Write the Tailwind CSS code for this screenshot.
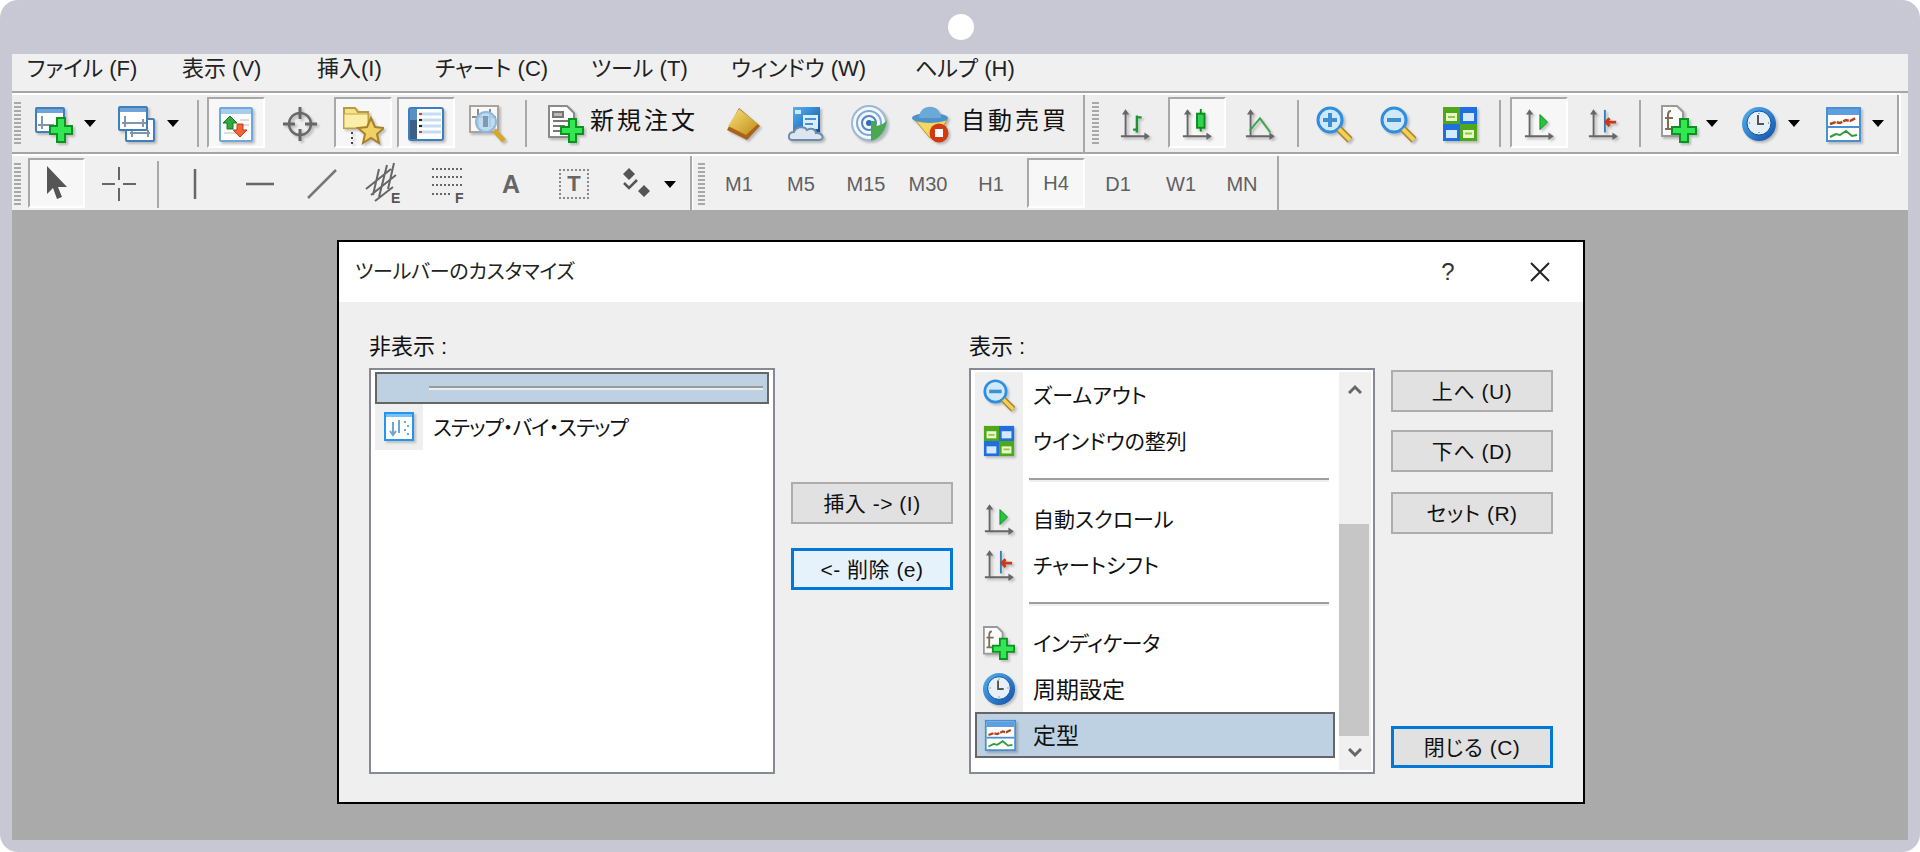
<!DOCTYPE html>
<html lang="ja">
<head>
    <title>ツールバーのカスタマイズ</title>
    <meta charset="utf-8">
    <meta name="viewport" content="width=device-width, initial-scale=1">
    <script src="https://cdn.jsdelivr.net/npm/@tailwindcss/browser@4"></script>
</head>
<body class="bg-white font-['Liberation_Sans','Noto_Sans_CJK_JP',sans-serif] [font-feature-settings:'palt'] text-[#111]">

    <!-- Shared icons -->
    <svg class="absolute w-0 h-0">
        <defs>
            <linearGradient id="gold" x1="0" y1="0" x2="1" y2="1"><stop offset="0" stop-color="#f8e27a"/><stop offset="1" stop-color="#c08a18"/></linearGradient>
            <linearGradient id="blue" x1="0" y1="0" x2="1" y2="1"><stop offset="0" stop-color="#54b4f2"/><stop offset="1" stop-color="#0f4fa8"/></linearGradient>
        </defs>
        <symbol id="i-newchart" viewBox="0 0 38 38">
            <rect x="1" y="3" width="28" height="24" rx="1" fill="#fff" stroke="#3f7fbd" stroke-width="2"/>
            <rect x="2" y="4" width="26" height="4" fill="#6fa5d6"/>
            <path d="M7 11v13M3 20h16" stroke="#7f96ad" stroke-width="2" fill="none"/>
            <polygon points="22,13 30,13 30,21 37,21 37,29 30,29 30,37 22,37 22,29 15,29 15,21 22,21" fill="#33e653" stroke="#0a941f" stroke-width="2"/>
        </symbol>
        <symbol id="i-profiles" viewBox="0 0 38 38">
            <rect x="8" y="14" width="28" height="22" rx="1" fill="#fff" stroke="#3f7fbd" stroke-width="2"/>
            <path d="M12 28h20M14 25v7M30 25v7" stroke="#7f96ad" stroke-width="2"/>
            <rect x="1" y="2" width="28" height="23" rx="1" fill="#fff" stroke="#3f7fbd" stroke-width="2"/>
            <rect x="2" y="3" width="26" height="4" fill="#6fa5d6"/>
            <path d="M4 18h24M7 11v11M25 14v8" stroke="#7f96ad" stroke-width="2"/>
        </symbol>
        <symbol id="i-market" viewBox="0 0 36 36">
            <rect x="2" y="2" width="32" height="33" rx="1" fill="#fdfdfd" stroke="#6fa8dc" stroke-width="2"/>
            <rect x="3" y="3" width="30" height="5" fill="#a8cdec"/>
            <path d="M22 14h9M22 19h9M6 27h12" stroke="#ddd" stroke-width="2"/>
            <polygon points="12,10 19,17 15,17 15,23 9,23 9,17 5,17" fill="#33a83c" stroke="#147a22"/>
            <polygon points="22,31 29,24 25,24 25,18 19,18 19,24 15,24" fill="#f0653a" stroke="#c83a18"/>
        </symbol>
        <symbol id="i-crosshair" viewBox="0 0 36 36">
            <circle cx="18" cy="18" r="11" fill="none" stroke="#6a6a6a" stroke-width="2.5"/>
            <path d="M18 1v12M18 23v12M1 18h12M23 18h12" stroke="#666" stroke-width="3"/>
        </symbol>
        <symbol id="i-favorites" viewBox="0 0 42 42">
            <path d="M2 7V5h11l3 4h10v16H2z" fill="#f5e38a" stroke="#b89b3a" stroke-width="2"/>
            <rect x="2" y="11" width="24" height="14" fill="#fbeea8" stroke="#c2a548"/>
            <polygon points="29,15 33,24 42,25 35,31 37,40 29,35 21,40 23,31 16,25 25,24" fill="#eed264" stroke="#a8802a" stroke-width="2"/>
            <path d="M10 29v2M10 34v2M10 39v2" stroke="#444" stroke-width="2"/>
        </symbol>
        <symbol id="i-navigator" viewBox="0 0 36 36">
            <rect x="1" y="2" width="34" height="32" rx="2" fill="#fff" stroke="#3a7fc0" stroke-width="2"/>
            <rect x="2" y="3" width="7" height="30" fill="#5c90c4"/>
            <rect x="2" y="14" width="7" height="19" fill="#3d5f86"/>
            <path d="M11 8h22M11 14h22M11 20h22M11 26h22" stroke="#c6dcf2" stroke-width="3"/>
            <path d="M11 8h3M11 26h3" stroke="#d8452a" stroke-width="2"/>
            <path d="M11 14h3M11 20h3" stroke="#222" stroke-width="2"/>
        </symbol>
        <symbol id="i-tester" viewBox="0 0 38 38">
            <rect x="1" y="1" width="28" height="26" fill="#f8f8f8" stroke="#aaa39c" stroke-width="2"/>
            <path d="M9 4v18M21 4v18M3 12h24" stroke="#8a8a8a" stroke-width="2"/>
            <circle cx="17" cy="17" r="10" fill="#b4d6f0" fill-opacity=".85" stroke="#8fb8da" stroke-width="2"/>
            <rect x="14" y="11" width="5" height="11" fill="#7d9ab5"/>
            <path d="M25 25l10 11" stroke="#d4a82f" stroke-width="5"/>
        </symbol>
        <symbol id="i-neworder" viewBox="0 0 36 38">
            <path d="M1 1h18l7 7v24H1z" fill="#fff" stroke="#8a8a8a" stroke-width="2"/>
            <path d="M5 7h10v5H5zM5 16h16M5 21h12M5 26h10" stroke="#777" stroke-width="2" fill="#bbb"/>
            <polygon points="21,14 28,14 28,22 35,22 35,29 28,29 28,37 21,37 21,29 13,29 13,22 21,22" fill="#33e653" stroke="#0a941f" stroke-width="2"/>
        </symbol>
        <symbol id="i-book" viewBox="0 0 36 36">
            <polygon points="14,2 35,20 22,34 2,24" fill="#a8621a"/>
            <polygon points="14,3 33,18 21,29 3,20" fill="url(#gold)"/>
        </symbol>
        <symbol id="i-server" viewBox="0 0 36 36">
            <rect x="5" y="1" width="27" height="25" fill="url(#blue)"/>
            <rect x="15" y="9" width="15" height="14" fill="#d9eefc"/>
            <path d="M17 13h11M17 18h8" stroke="#4a90d0" stroke-width="2"/>
            <rect x="7" y="4" width="6" height="4" fill="#cfeaff"/>
            <path d="M4 34c-5 0-4-8 2-8 2-6 11-6 13-2 5-3 9 0 9 3 7-1 9 7 3 7z" fill="#dde6ee" stroke="#6c8cab" stroke-width="2"/>
        </symbol>
        <symbol id="i-signal" viewBox="0 0 38 38">
            <circle cx="19" cy="18" r="17" fill="#f5f8fa" stroke="#9ab9d8" stroke-width="2"/>
            <circle cx="19" cy="18" r="12" fill="none" stroke="#7fa8d6" stroke-width="2"/>
            <circle cx="19" cy="18" r="7" fill="none" stroke="#4f86c6" stroke-width="2"/>
            <circle cx="19" cy="18" r="3" fill="#2c6fb4"/>
            <path d="M21 16h4v5c6 0 11-4 12-6-1 10-7 19-16 21z" fill="#49a94e"/>
        </symbol>
        <symbol id="i-auto" viewBox="0 0 38 38">
            <path d="M4 15l15 18 8-3 9-15z" fill="#f3d75e" stroke="#b8962c"/>
            <ellipse cx="19" cy="13" rx="18" ry="5" fill="#4b93c8"/>
            <path d="M8 13c0-15 22-15 22 0z" fill="#6baad6"/>
            <circle cx="28" cy="28" r="9.5" fill="#d23a14"/>
            <rect x="24" y="24" width="8" height="8" fill="#fff"/>
        </symbol>
        <g id="axis">
            <path d="M7 3v27M2 30h29M7 3l-2 3h4zM31 30l-3-2v4z" stroke="#666" stroke-width="2" fill="#666"/>
        </g>
        <symbol id="i-bar" viewBox="0 0 34 34">
            <use href="#axis"/>
            <path d="M19 8v18M19 10h5M15 23h4" stroke="#139a2a" stroke-width="2.5" fill="none"/>
        </symbol>
        <symbol id="i-candle" viewBox="0 0 34 34">
            <use href="#axis"/>
            <path d="M21 1v24" stroke="#0c8a1e" stroke-width="2"/>
            <rect x="17" y="6" width="8" height="15" fill="#30d34f" stroke="#0c8a1e" stroke-width="2"/>
        </symbol>
        <symbol id="i-line" viewBox="0 0 34 34">
            <use href="#axis"/>
            <path d="M6 24l11-13 11 15" stroke="#3aa64a" stroke-width="2" fill="none"/>
        </symbol>
        <symbol id="i-zoomin" viewBox="0 0 36 36">
            <circle cx="14" cy="14" r="12" fill="#cfe9fb" stroke="#2f8ee0" stroke-width="3"/>
            <path d="M14 7v14M7 14h14" stroke="#3d8fd0" stroke-width="4"/>
            <path d="M23 23l11 11" stroke="#a8841f" stroke-width="7"/>
            <path d="M23 23l11 11" stroke="#f0cf5c" stroke-width="4"/>
        </symbol>
        <symbol id="i-zoomout" viewBox="0 0 36 36">
            <circle cx="14" cy="14" r="12" fill="#cfe9fb" stroke="#2f8ee0" stroke-width="3"/>
            <path d="M7 14h14" stroke="#3d8fd0" stroke-width="4"/>
            <path d="M23 23l11 11" stroke="#a8841f" stroke-width="7"/>
            <path d="M23 23l11 11" stroke="#f0cf5c" stroke-width="4"/>
        </symbol>
        <symbol id="i-tile" viewBox="0 0 36 36">
            <rect x="1" y="1" width="17" height="17" fill="#4fa81a"/><rect x="18" y="1" width="17" height="17" fill="#1f6fe0"/>
            <rect x="1" y="18" width="17" height="17" fill="#1f6fe0"/><rect x="18" y="18" width="17" height="17" fill="#4fa81a"/>
            <rect x="4" y="7" width="11" height="8" fill="#e8f8c8"/><rect x="21" y="7" width="11" height="8" fill="#d4e9fb"/>
            <rect x="4" y="24" width="11" height="8" fill="#d4e9fb"/><rect x="21" y="24" width="11" height="8" fill="#e8f8c8"/>
            <path d="M6 11h7M23 27.500h7" stroke="#8fc84a" stroke-width="2"/>
        </symbol>
        <symbol id="i-scroll" viewBox="0 0 34 34">
            <use href="#axis"/>
            <polygon points="18,7 26,15 18,23" fill="#22c83a" stroke="#0f8a20"/>
        </symbol>
        <symbol id="i-shift" viewBox="0 0 34 34">
            <use href="#axis"/>
            <path d="M19 2v24" stroke="#2f7fb8" stroke-width="2"/>
            <path d="M21 15h10M24 11l-4 4 4 4" stroke="#c8381a" stroke-width="3" fill="none"/>
        </symbol>
        <symbol id="i-indicator" viewBox="0 0 36 38">
            <path d="M1 1h15l6 6v24H1z" fill="#fbfbfb" stroke="#9a9a9a" stroke-width="2"/>
            <path d="M10 6c-3 0-3 2-3 4v14M4 13h8M4 24h7" stroke="#7d6f52" stroke-width="2" fill="none"/>
            <polygon points="19,14 27,14 27,22 35,22 35,29 27,29 27,37 19,37 19,29 11,29 11,22 19,22" fill="#33e653" stroke="#0a941f" stroke-width="2"/>
        </symbol>
        <symbol id="i-clock" viewBox="0 0 36 36">
            <circle cx="18" cy="18" r="17" fill="url(#blue)"/>
            <circle cx="18" cy="17" r="12" fill="#e8f0f7" stroke="#0f4fa8"/>
            <path d="M17 9v9h6" stroke="#555" stroke-width="2" fill="none"/>
            <path d="M18 7v1M18 26v1M8 17h1M27 17h1" stroke="#8aa" stroke-width="2"/>
        </symbol>
        <symbol id="i-template" viewBox="0 0 36 36">
            <rect x="2" y="2" width="33" height="33" fill="#fff" stroke="#4a90d0" stroke-width="2"/>
            <rect x="3" y="3" width="31" height="6" fill="#5d9fe0"/>
            <path d="M3 21h31" stroke="#4a90d0" stroke-width="2"/>
            <path d="M5 18l6-2 4 1 6-3 4 1 6-3" stroke="#b0421c" stroke-width="2.500" fill="none" stroke-dasharray="6 1"/>
            <path d="M5 31l6-3 4 1 6-4 6 5 5-1" stroke="#2f9a3a" stroke-width="2" fill="none"/>
        </symbol>
        <symbol id="i-step" viewBox="0 0 30 30">
            <rect x="1" y="1" width="28" height="27" fill="#fff" stroke="#2196f3" stroke-width="2"/>
            <rect x="2" y="2" width="26" height="3" fill="#7cc0f8"/>
            <path d="M9 10v13M15 8v13M6 19l3 4 3-4" stroke="#6aa6d8" stroke-width="2" fill="none"/>
            <path d="M21 9v2M24 13v2M21 17v2M24 21v2" stroke="#6aa6d8" stroke-width="2"/>
        </symbol>
    </svg>

    <div class="relative w-[1920px] h-[852px] rounded-[18px] bg-[#c8c8d4] pt-[54px] px-[12px] pb-[12px] flex flex-col overflow-hidden">
        <div class="absolute left-[948px] top-[14px] w-[26px] h-[26px] rounded-full bg-white"></div>

        <!-- Menu bar -->
        <div class="h-[37px] bg-[#f0f0f0] flex items-center pl-[15px] pb-[8px] text-[22px] leading-[28px] text-[#222] whitespace-nowrap">
            <div class="w-[155px]">ファイル (F)</div>
            <div class="w-[135px]">表示 (V)</div>
            <div class="w-[118px]">挿入(I)</div>
            <div class="w-[156px]">チャート (C)</div>
            <div class="w-[140px]">ツール (T)</div>
            <div class="w-[184px]">ウィンドウ (W)</div>
            <div>ヘルプ (H)</div>
        </div>
        <div class="h-[2px] bg-[#a5a5a5]"></div>

        <!-- Main toolbar -->
        <div class="bg-[#f0f0f0]">
            <div class="w-[1889px] h-[63px] border-y-2 border-r-2 border-white">
                <div class="h-full border-b-2 border-r-2 border-[#a5a5a5] bg-[#eeeeee] flex items-center [&_svg]:drop-shadow-[2px_2px_1px_rgba(0,0,0,0.22)]">
                    <div class="ml-[2px] w-[7px] h-[43px] bg-[repeating-linear-gradient(to_bottom,#a8a8a8_0,#a8a8a8_2px,transparent_2px,transparent_4px)]"></div>
                    <svg class="ml-[14px] w-[38px] h-[38px] shrink-0"><use href="#i-newchart"/></svg>
                    <div class="ml-[11px] w-[12px] flex justify-center"><div class="border-x-[6px] border-t-[7px] border-x-transparent border-t-black"></div></div>
                    <svg class="ml-[22px] w-[38px] h-[38px] shrink-0"><use href="#i-profiles"/></svg>
                    <div class="ml-[11px] w-[12px] flex justify-center"><div class="border-x-[6px] border-t-[7px] border-x-transparent border-t-black"></div></div>
                    <div class="ml-[18px] w-[2px] h-[47px] bg-[#a8a8a8]"></div>
                    <div class="ml-[8px] w-[58px] h-[51px] -mt-[2px] pt-[3px] flex items-center justify-center border-2 border-t-[#a8a8a8] border-l-[#a8a8a8] border-r-white border-b-white bg-[#f7f7f7]"><svg class="w-[36px] h-[36px]"><use href="#i-market"/></svg></div>
                    <svg class="ml-[17px] w-[36px] h-[36px] shrink-0"><use href="#i-crosshair"/></svg>
                    <div class="ml-[16px] w-[58px] h-[51px] -mt-[2px] pt-[3px] flex items-center justify-center border-2 border-t-[#a8a8a8] border-l-[#a8a8a8] border-r-white border-b-white bg-[#f7f7f7]"><svg class="w-[42px] h-[42px]"><use href="#i-favorites"/></svg></div>
                    <div class="ml-[5px] w-[58px] h-[51px] -mt-[2px] pt-[3px] flex items-center justify-center border-2 border-t-[#a8a8a8] border-l-[#a8a8a8] border-r-white border-b-white bg-[#f7f7f7]"><svg class="w-[36px] h-[36px]"><use href="#i-navigator"/></svg></div>
                    <svg class="ml-[14px] w-[38px] h-[38px] shrink-0"><use href="#i-tester"/></svg>
                    <div class="ml-[18px] w-[2px] h-[47px] bg-[#a8a8a8]"></div>
                    <svg class="ml-[21px] w-[36px] h-[38px] shrink-0"><use href="#i-neworder"/></svg>
                    <div class="ml-[6px] w-[107px] -mt-[5px] text-[24px] tracking-[3px] leading-[30px] whitespace-nowrap">新規注文</div>
                    <svg class="ml-[28px] w-[36px] h-[36px] shrink-0"><use href="#i-book"/></svg>
                    <svg class="ml-[27px] w-[36px] h-[36px] shrink-0"><use href="#i-server"/></svg>
                    <svg class="ml-[26px] w-[38px] h-[38px] shrink-0"><use href="#i-signal"/></svg>
                    <svg class="ml-[23px] w-[38px] h-[38px] shrink-0"><use href="#i-auto"/></svg>
                    <div class="ml-[12px] w-[106px] -mt-[5px] text-[24px] tracking-[3px] leading-[30px] whitespace-nowrap">自動売買</div>
                    <div class="ml-[16px] w-[2px] self-stretch bg-[#a8a8a8]"></div>
                    <div class="ml-[7px] w-[7px] h-[43px] bg-[repeating-linear-gradient(to_bottom,#a8a8a8_0,#a8a8a8_2px,transparent_2px,transparent_4px)]"></div>
                    <svg class="ml-[20px] w-[32px] h-[36px] shrink-0"><use href="#i-bar"/></svg>
                    <div class="ml-[17px] w-[58px] h-[51px] -mt-[2px] pt-[3px] flex items-center justify-center border-2 border-t-[#a8a8a8] border-l-[#a8a8a8] border-r-white border-b-white bg-[#f7f7f7]"><svg class="w-[32px] h-[36px]"><use href="#i-candle"/></svg></div>
                    <svg class="ml-[18px] w-[32px] h-[36px] shrink-0"><use href="#i-line"/></svg>
                    <div class="ml-[21px] w-[2px] h-[47px] bg-[#a8a8a8]"></div>
                    <svg class="ml-[17px] w-[36px] h-[38px] shrink-0"><use href="#i-zoomin"/></svg>
                    <svg class="ml-[28px] w-[36px] h-[38px] shrink-0"><use href="#i-zoomout"/></svg>
                    <svg class="ml-[26px] w-[36px] h-[38px] shrink-0"><use href="#i-tile"/></svg>
                    <div class="ml-[21px] w-[2px] h-[47px] bg-[#a8a8a8]"></div>
                    <div class="ml-[9px] w-[58px] h-[51px] -mt-[2px] pt-[3px] flex items-center justify-center border-2 border-t-[#a8a8a8] border-l-[#a8a8a8] border-r-white border-b-white bg-[#f7f7f7]"><svg class="w-[32px] h-[36px]"><use href="#i-scroll"/></svg></div>
                    <svg class="ml-[19px] w-[32px] h-[36px] shrink-0"><use href="#i-shift"/></svg>
                    <div class="ml-[20px] w-[2px] h-[47px] bg-[#a8a8a8]"></div>
                    <svg class="ml-[20px] w-[36px] h-[38px] shrink-0"><use href="#i-indicator"/></svg>
                    <div class="ml-[9px] w-[12px] flex justify-center"><div class="border-x-[6px] border-t-[7px] border-x-transparent border-t-black"></div></div>
                    <svg class="ml-[23px] w-[36px] h-[38px] shrink-0"><use href="#i-clock"/></svg>
                    <div class="ml-[11px] w-[12px] flex justify-center"><div class="border-x-[6px] border-t-[7px] border-x-transparent border-t-black"></div></div>
                    <svg class="ml-[25px] w-[36px] h-[36px] shrink-0"><use href="#i-template"/></svg>
                    <div class="ml-[11px] w-[12px] flex justify-center"><div class="border-x-[6px] border-t-[7px] border-x-transparent border-t-black"></div></div>
                </div>
            </div>
        </div>

        <!-- Drawing and period toolbar -->
        <div class="h-[54px] bg-[#f0f0f0] flex items-center pt-[2px] text-[20px] text-[#606060]">
            <div class="ml-[2px] w-[7px] h-[43px] bg-[repeating-linear-gradient(to_bottom,#a8a8a8_0,#a8a8a8_2px,transparent_2px,transparent_4px)]"></div>
            <div class="ml-[7px] w-[57px] h-[50px] -mt-[2px] flex items-center justify-center border-2 border-t-[#a8a8a8] border-l-[#a8a8a8] border-r-white border-b-white bg-[#f7f7f7]">
                <svg class="w-[24px] h-[36px]" viewBox="0 0 24 36"><path d="M2 1v28l6-6 4 11 5-2-4-10h9z" fill="#555"/></svg>
            </div>
            <svg class="ml-[17px] w-[34px] h-[34px] shrink-0" viewBox="0 0 34 34"><path d="M17 0v13M17 21v13M0 17h13M21 17h13" stroke="#666" stroke-width="2"/></svg>
            <div class="ml-[21px] w-[2px] h-[47px] bg-[#a8a8a8]"></div>
            <svg class="ml-[19px] w-[34px] h-[34px] shrink-0" viewBox="0 0 34 34"><path d="M17 2v30" stroke="#666" stroke-width="2.500"/></svg>
            <svg class="ml-[31px] w-[34px] h-[34px] shrink-0" viewBox="0 0 34 34"><path d="M3 17h28" stroke="#666" stroke-width="2.500"/></svg>
            <svg class="ml-[28px] w-[34px] h-[34px] shrink-0" viewBox="0 0 34 34"><path d="M3 31L31 3" stroke="#777" stroke-width="2.500"/></svg>
            <svg class="ml-[26px] w-[38px] h-[46px] shrink-0" viewBox="0 0 38 46">
                <path d="M1 28L26 8M6 34L31 14M10 40L28 26M14 8l-6 26M22 4l-8 32M29 2l-6 26" stroke="#666" stroke-width="2" fill="none"/>
                <text x="26" y="42" font-size="14" font-weight="700" fill="#555">E</text>
            </svg>
            <svg class="ml-[27px] w-[36px] h-[46px] shrink-0" viewBox="0 0 36 46">
                <path d="M2 8h30M2 16h30M2 24h30M2 33h20" stroke="#666" stroke-width="2" stroke-dasharray="2 2" fill="none"/>
                <text x="25" y="42" font-size="14" font-weight="700" fill="#555">F</text>
            </svg>
            <div class="ml-[28px] w-[34px] text-center text-[25px] font-bold leading-[30px] text-[#666]">A</div>
            <div class="ml-[31px] w-[30px] h-[30px] border-2 border-dotted border-[#888] flex items-center justify-center text-[22px] font-bold leading-none text-[#666]">T</div>
            <svg class="ml-[31px] w-[34px] h-[34px] shrink-0" viewBox="0 0 34 34">
                <path d="M9 1l6 6-6 6-6-6zM24 18l6 6-6 6-6-6z" fill="#555"/>
                <path d="M4 16l5 5 8-8" stroke="#555" stroke-width="2.500" fill="none"/>
            </svg>
            <div class="ml-[10px] w-[12px] flex justify-center"><div class="border-x-[6px] border-t-[7px] border-x-transparent border-t-black"></div></div>
            <div class="ml-[14px] w-[3px] self-stretch -mt-[2px] border-r border-white bg-[#a8a8a8]"></div>
            <div class="ml-[5px] w-[7px] h-[43px] bg-[repeating-linear-gradient(to_bottom,#a8a8a8_0,#a8a8a8_2px,transparent_2px,transparent_4px)]"></div>
            <div class="ml-[5px] w-[58px] text-center">M1</div>
            <div class="ml-[4px] w-[58px] text-center">M5</div>
            <div class="ml-[7px] w-[58px] text-center">M15</div>
            <div class="ml-[4px] w-[58px] text-center">M30</div>
            <div class="ml-[5px] w-[58px] text-center">H1</div>
            <div class="ml-[7px] w-[58px] h-[50px] -mt-[2px] flex items-center justify-center border-2 border-t-[#a8a8a8] border-l-[#a8a8a8] border-r-white border-b-white bg-[#f7f7f7]">H4</div>
            <div class="ml-[4px] w-[58px] text-center">D1</div>
            <div class="ml-[5px] w-[58px] text-center">W1</div>
            <div class="ml-[3px] w-[58px] text-center">MN</div>
            <div class="ml-[6px] w-[2px] self-stretch -mt-[2px] bg-[#a8a8a8]"></div>
        </div>

        <!-- Workspace -->
        <div class="flex-1 bg-[#aaaaaa] pt-[30px] pl-[325px]">
            <div class="w-[1248px] h-[564px] border-2 border-black bg-[#efefef] flex flex-col">
                <div class="h-[60px] bg-white flex items-center pl-[16px] pr-[33px] text-[20px] whitespace-nowrap">
                    <div class="flex-1 text-[#222] tracking-[-0.2px]">ツールバーのカスタマイズ</div>
                    <div class="w-[20px] text-center text-[24px] text-[#333]">?</div>
                    <svg class="ml-[72px] w-[20px] h-[20px]" viewBox="0 0 20 20"><path d="M1 1l18 18M19 1L1 19" stroke="#222" stroke-width="2"/></svg>
                </div>
                <div class="flex-1 flex pl-[30px] text-[21px] whitespace-nowrap">

                    <!-- Hidden items -->
                    <div class="w-[406px]">
                        <div class="h-[66px] pt-[30px] leading-[30px] text-[22px]">非表示 :</div>
                        <div class="h-[406px] border-2 border-[#868a94] bg-white pt-[2px] pl-[4px]">
                            <div class="w-[394px] h-[32px] border-2 border-[#666666] bg-[#bdd1e2] flex items-center pl-[52px]">
                                <div class="w-[334px] h-[4px] border-t-2 border-[#9a9a9a] bg-[#e8eef3]"></div>
                            </div>
                            <div class="h-[46px] flex items-center">
                                <div class="w-[48px] h-full bg-[#efefef] flex items-center justify-center"><svg class="w-[30px] h-[30px] drop-shadow-[2px_2px_1px_rgba(0,0,0,0.2)]"><use href="#i-step"/></svg></div>
                                <div class="pl-[10px] pt-[2px] tracking-[-1px]">ステップ・バイ・ステップ</div>
                            </div>
                        </div>
                    </div>

                    <!-- Insert / remove -->
                    <div class="ml-[16px] w-[162px] pt-[180px] flex flex-col gap-[24px] tracking-[0.5px]">
                        <div class="h-[42px] pt-[1px] border-2 border-[#adadad] bg-[#e1e1e1] flex items-center justify-center">挿入 -&gt; (I)</div>
                        <div class="h-[42px] pt-[1px] border-[3px] border-[#0078d7] bg-[#e5f1fb] flex items-center justify-center">&lt;- 削除 (e)</div>
                    </div>

                    <!-- Shown items -->
                    <div class="ml-[16px] w-[406px]">
                        <div class="h-[66px] pt-[30px] leading-[30px] text-[22px]">表示 :</div>
                        <div class="h-[406px] border-2 border-[#868a94] bg-white pt-[2px] pl-[4px] flex">
                            <div class="w-[360px] [&_svg]:drop-shadow-[2px_2px_1px_rgba(0,0,0,0.2)]">
                                <div class="h-[46px] flex items-center"><div class="w-[48px] h-full bg-[#efefef] flex items-center justify-center"><svg class="w-[32px] h-[34px]"><use href="#i-zoomout"/></svg></div><div class="pl-[10px] pt-[2px]">ズームアウト</div></div>
                                <div class="h-[46px] flex items-center"><div class="w-[48px] h-full bg-[#efefef] flex items-center justify-center"><svg class="w-[32px] h-[32px]"><use href="#i-tile"/></svg></div><div class="pl-[10px] pt-[2px]">ウインドウの整列</div></div>
                                <div class="h-[32px] flex"><div class="w-[48px] bg-[#efefef]"></div><div class="ml-[6px] mt-[14px] w-[300px] h-[4px] border-t-2 border-[#9f9f9f] bg-[#efefef]"></div></div>
                                <div class="h-[46px] flex items-center"><div class="w-[48px] h-full bg-[#efefef] flex items-center justify-center"><svg class="w-[32px] h-[32px]"><use href="#i-scroll"/></svg></div><div class="pl-[10px] pt-[2px]">自動スクロール</div></div>
                                <div class="h-[46px] flex items-center"><div class="w-[48px] h-full bg-[#efefef] flex items-center justify-center"><svg class="w-[32px] h-[32px]"><use href="#i-shift"/></svg></div><div class="pl-[10px] pt-[2px]">チャートシフト</div></div>
                                <div class="h-[32px] flex"><div class="w-[48px] bg-[#efefef]"></div><div class="ml-[6px] mt-[14px] w-[300px] h-[4px] border-t-2 border-[#9f9f9f] bg-[#efefef]"></div></div>
                                <div class="h-[46px] flex items-center"><div class="w-[48px] h-full bg-[#efefef] flex items-center justify-center"><svg class="w-[32px] h-[34px]"><use href="#i-indicator"/></svg></div><div class="pl-[10px] pt-[2px] tracking-[-0.5px]">インディケータ</div></div>
                                <div class="h-[46px] flex items-center"><div class="w-[48px] h-full bg-[#efefef] flex items-center justify-center"><svg class="w-[34px] h-[34px]"><use href="#i-clock"/></svg></div><div class="pl-[10px] pt-[2px] text-[23px]">周期設定</div></div>
                                <div class="h-[46px] border-2 border-[#666666] bg-[#bdd1e2] flex items-center"><div class="w-[46px] flex items-center justify-center"><svg class="w-[32px] h-[32px]"><use href="#i-template"/></svg></div><div class="pl-[10px] pt-[2px] text-[23px]">定型</div></div>
                            </div>
                            <div class="ml-[4px] w-[32px] h-[398px] bg-[#f0f0f0] flex flex-col">
                                <div class="h-[152px] pt-[12px] flex justify-center"><svg class="w-[14px] h-[10px]" viewBox="0 0 14 10"><path d="M1 9l6-6 6 6" stroke="#666" stroke-width="3" fill="none"/></svg></div>
                                <div class="w-[30px] h-[212px] bg-[#c6c6c6]"></div>
                                <div class="flex-1 pt-[12px] flex justify-center"><svg class="w-[14px] h-[10px]" viewBox="0 0 14 10"><path d="M1 1l6 6 6-6" stroke="#666" stroke-width="3" fill="none"/></svg></div>
                            </div>
                        </div>
                    </div>

                    <!-- Order buttons -->
                    <div class="ml-[16px] w-[162px] pt-[68px] pb-[34px] flex flex-col tracking-[0.5px]">
                        <div class="h-[42px] pt-[1px] border-2 border-[#adadad] bg-[#e1e1e1] flex items-center justify-center">上へ (U)</div>
                        <div class="mt-[18px] h-[42px] pt-[1px] border-2 border-[#adadad] bg-[#e1e1e1] flex items-center justify-center">下へ (D)</div>
                        <div class="mt-[20px] h-[42px] pt-[1px] border-2 border-[#adadad] bg-[#e1e1e1] flex items-center justify-center">セット (R)</div>
                        <div class="mt-auto h-[42px] pt-[1px] border-[3px] border-[#0078d7] bg-[#e1e1e1] flex items-center justify-center">閉じる (C)</div>
                    </div>
                </div>
            </div>
        </div>
    </div>
</body>
</html>
